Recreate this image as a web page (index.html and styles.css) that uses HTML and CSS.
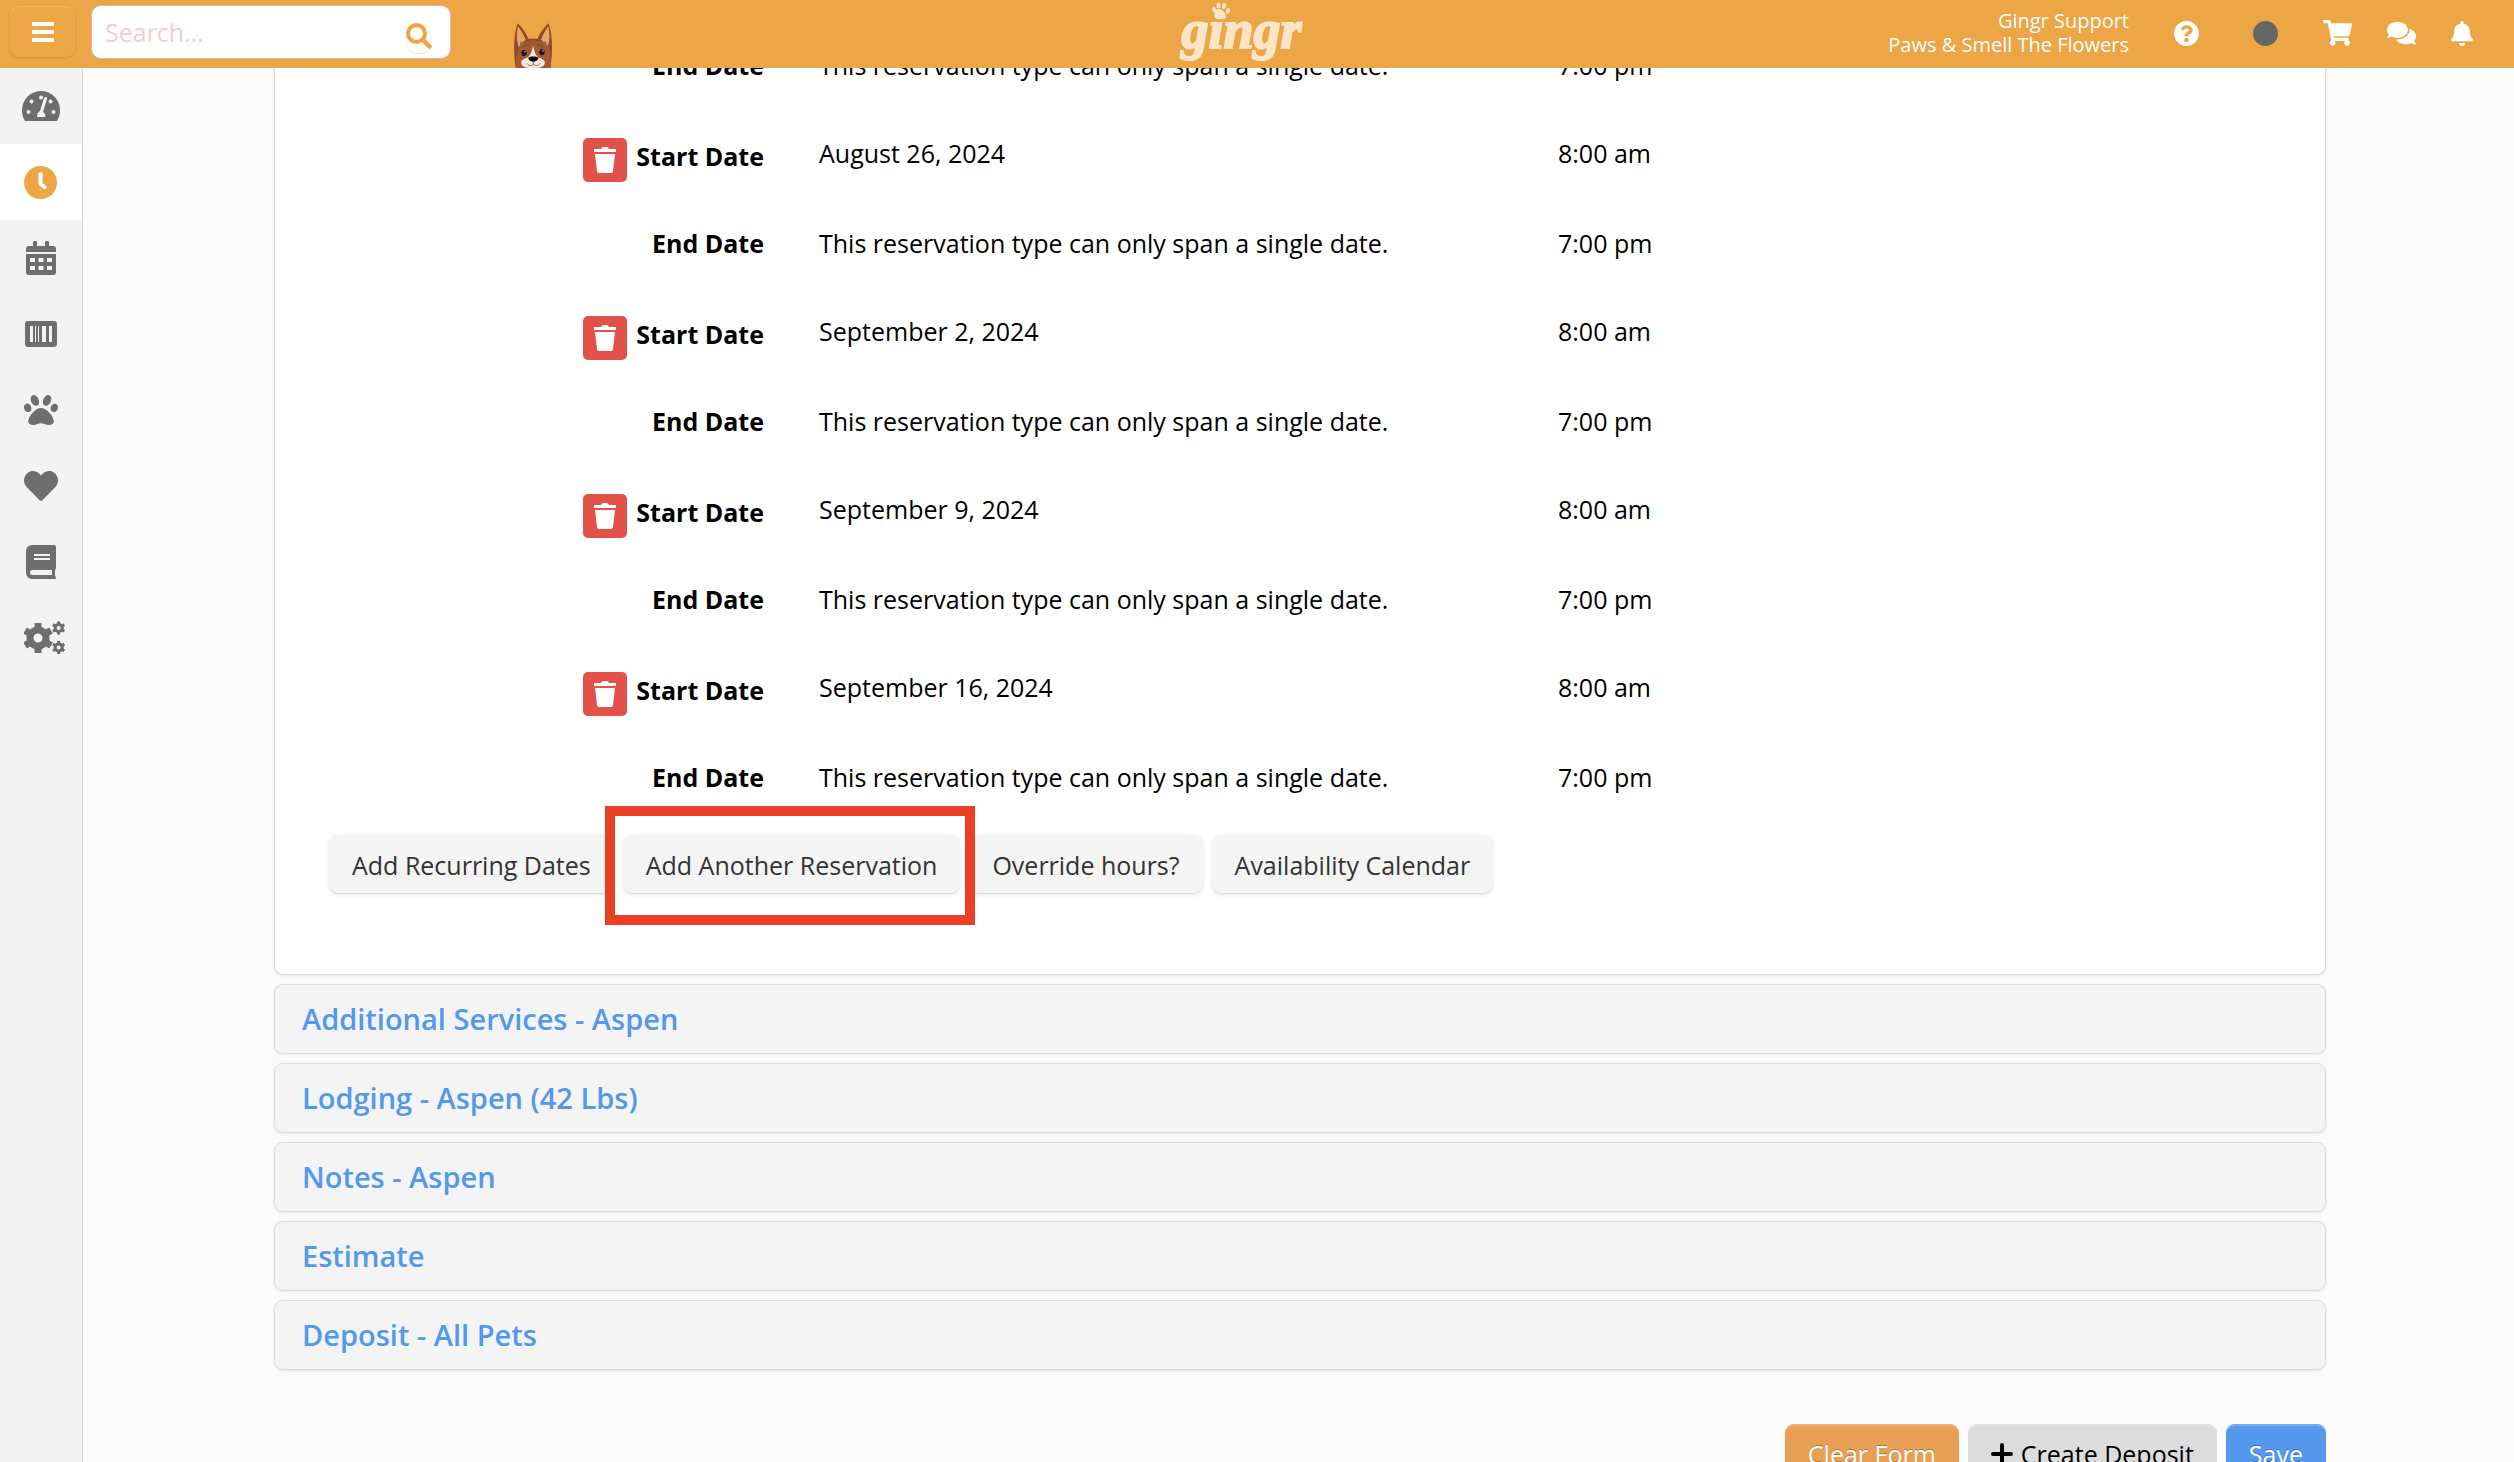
FILE: index.html
```
<!DOCTYPE html>
<html lang="en">
    <head>
        <meta charset="UTF-8">
        <meta name="viewport" content="width=device-width, initial-scale=1.0">
        <title>Gingr - New Reservation</title>
        <link rel="stylesheet" href="styles.css">
    </head>

    <body>

        <!-- Top bar -->
        <header class="topbar">
            <div class="topbar-left">
                <button type="button" class="menu-toggle" aria-label="Toggle menu">
                    <svg width="24" height="20" viewBox="0 0 24 20"><path fill="currentColor" d="M1 0h22v4H1zM1 8h22v4H1zM1 16h22v4H1z"/></svg>
                </button>
                <form class="search">
                    <input type="text" class="search-input" placeholder="Search..." aria-label="Search">
                    <button type="submit" class="search-button" aria-label="Search">
                        <svg width="26" height="26" viewBox="0 0 26 26" fill="none" stroke="currentColor"><circle cx="10.500" cy="10.500" r="8.500" stroke-width="4"/><path d="M17 17l6.500 6.500" stroke-width="4.500" stroke-linecap="round"/></svg>
                    </button>
                </form>
                <svg class="mascot" width="40" height="45" viewBox="43 21 118 135">
                    <path fill="#8f4a26" d="M50 156C44 115 42 60 56 22c10 8 24 28 32 46h28c8-18 22-38 33-46 13 38 12 92 5 134z"/>
                    <path fill="#e9a36c" d="M57 31c8 10 18 27 23 40-9 6-16 14-20 24C52 76 52 52 57 31zM148 31c-8 10-17 27-22 40 9 6 15 14 19 24 8-19 8-43 3-64z"/>
                    <path fill="#a5592f" d="M51 156c0-28 2-52 15-72 9-14 66-14 77 0 13 20 13 44 12 72z"/>
                    <path fill="#8f6a45" d="M64 78c8-2 13 2 10 8-5 6-9 8-13 8zM142 78c-8-2-13 2-10 8 5 6 9 8 12 8z"/>
                    <path fill="none" stroke="#85502f" stroke-width="4" stroke-linecap="round" d="M72 92q8-8 18-6M113 86q10-2 18 6"/>
                    <path fill="#f4e9df" d="M102 88c3 16 7 30 16 36 12 6 22 8 19 19-4 10-14 13-35 13s-32-3-35-13c-3-11 8-13 19-19 9-6 14-20 16-36z"/>
                    <ellipse cx="75" cy="111" rx="8" ry="9" fill="#15151a"/>
                    <ellipse cx="129" cy="109" rx="8" ry="9" fill="#15151a"/>
                    <circle cx="78" cy="107" r="2" fill="#fff"/>
                    <circle cx="132" cy="105" r="2" fill="#fff"/>
                    <path fill="#050505" d="M88 125c5-5 25-5 30 0 2 5-9 12-15 12s-17-7-15-12z"/>
                    <path fill="none" stroke="#4b3a32" stroke-width="2" d="M103 136v8M84 142c5 9 15 9 19 2 5 7 15 7 20-2"/>
                </svg>
            </div>

            <a href="#" class="logo">
                <svg class="logo-paw" width="18" height="18" viewBox="0 0 18 18" fill="currentColor"><ellipse cx="2.500" cy="8" rx="2" ry="3" transform="rotate(-25 2.500 8)"/><ellipse cx="6.500" cy="3.500" rx="2" ry="3"/><ellipse cx="12" cy="4" rx="2" ry="3" transform="rotate(15 12 4)"/><ellipse cx="16" cy="9" rx="2" ry="3" transform="rotate(30 16 9)"/><path d="M3 14c1-3 4-6 7-5s4 4 4 6c0 3-3 2-5 2-3 0-6 1-6-3z"/></svg>
                gingr
            </a>

            <div class="topbar-right">
                <div class="account">Gingr Support<br>Paws &amp; Smell The Flowers</div>
                <a href="#" class="top-link help" aria-label="Help">
                    <svg width="25" height="25" viewBox="8 8 496 496"><path fill="currentColor" d="M504 256c0 136.997-111.043 248-248 248S8 392.997 8 256C8 119.083 119.043 8 256 8s248 111.083 248 248zM262.655 90c-54.497 0-89.255 22.957-116.549 63.758-3.536 5.286-2.353 12.415 2.715 16.258l34.699 26.310c5.205 3.947 12.621 3.008 16.665-2.122 17.864-22.658 30.113-35.797 57.303-35.797 20.429 0 45.698 13.148 45.698 32.958 0 14.976-12.363 22.667-32.534 33.976C247.128 238.528 216 254.941 216 296v4c0 6.627 5.373 12 12 12h56c6.627 0 12-5.373 12-12v-1.333c0-28.462 83.186-29.647 83.186-106.667 0-58.002-60.165-102-116.531-102zM256 338c-25.365 0-46 20.635-46 46 0 25.364 20.635 46 46 46s46-20.636 46-46c0-25.365-20.635-46-46-46z"/></svg>
                </a>
                <span class="status"></span>
                <a href="#" class="top-link cart" aria-label="Cart">
                    <svg width="29" height="26" viewBox="0 0 576 512"><path fill="currentColor" d="M528.120 301.319l47.273-208C578.806 78.301 567.391 64 551.990 64H159.208l-9.166-44.810C147.758 8.021 137.930 0 126.529 0H24C10.745 0 0 10.745 0 24v16c0 13.255 10.745 24 24 24h69.883l70.248 343.435C147.325 417.100 136 435.222 136 456c0 30.928 25.072 56 56 56s56-25.072 56-56c0-15.674-6.447-29.835-16.824-40h209.647C430.447 426.165 424 440.326 424 456c0 30.928 25.072 56 56 56s56-25.072 56-56c0-22.172-12.888-41.332-31.579-50.405l5.517-24.276c3.413-15.018-8.002-29.319-23.403-29.319H218.117l-6.545-32h293.145c11.206 0 20.920-7.754 23.403-18.681z"/></svg>
                </a>
                <a href="#" class="top-link" aria-label="Messages">
                    <svg width="29" height="26" viewBox="0 0 576 512"><path fill="currentColor" d="M416 192c0-88.400-93.100-160-208-160S0 103.600 0 192c0 34.300 14.100 65.900 38 92-13.400 30.200-35.500 54.200-35.800 54.500-2.200 2.300-2.800 5.700-1.500 8.700S4.800 352 8 352c36.600 0 66.900-12.300 88.700-25 32.200 15.700 70.300 25 111.300 25 114.900 0 208-71.600 208-160zm122 220c23.900-26 38-57.700 38-92 0-66.900-53.500-124.200-129.300-148.100.9 6.600 1.300 13.300 1.300 20.100 0 105.900-107.700 192-240 192-10.800 0-21.300-.8-31.700-1.900C207.800 439.600 281.800 480 368 480c41 0 79.100-9.200 111.300-25 21.800 12.700 52.100 25 88.700 25 3.200 0 6.100-1.900 7.300-4.800 1.300-2.900.7-6.300-1.500-8.700-.3-.2-22.400-24.200-35.800-54.500z"/></svg>
                </a>
                <a href="#" class="top-link" aria-label="Notifications">
                    <svg width="22" height="25" viewBox="0 0 448 512"><path fill="currentColor" d="M224 512c35.320 0 63.970-28.650 63.970-64H160.030c0 35.350 28.650 64 63.970 64zm215.390-149.710c-19.320-20.760-55.470-51.990-55.470-154.290 0-77.700-54.480-139.900-127.940-155.160V32c0-17.670-14.320-32-31.980-32s-31.980 14.330-31.980 32v20.840C118.560 68.100 64.080 130.300 64.080 208c0 102.300-36.150 133.530-55.470 154.290-6 6.450-8.660 14.160-8.610 21.710.11 16.400 12.980 32 32.100 32h383.800c19.120 0 32-15.600 32.100-32 .05-7.550-2.610-15.270-8.610-21.710z"/></svg>
                </a>
            </div>
        </header>

        <div class="layout">

            <!-- Side menu -->
            <nav class="sidebar">
                <a href="#" class="side-link" aria-label="Dashboard">
                    <svg width="38" height="30" viewBox="0 0 38 30"><path fill="currentColor" d="M3 30C1 27 0 23 0 19a19 19 0 0 1 38 0c0 4-1 8-3 11z"/><g fill="#f3f3f3"><circle cx="19" cy="6.500" r="2"/><circle cx="9.500" cy="10.500" r="2"/><circle cx="28.500" cy="10.500" r="2"/><circle cx="6.500" cy="21" r="2"/><circle cx="31.500" cy="21" r="2"/><path d="M15 26c0-3 1-5 3-6l4-13c1-2 4-1 3 1l-4 13c2 1 3 3 2 5z"/></g></svg>
                </a>
                <a href="#" class="side-link active" aria-label="Reservations">
                    <svg width="33" height="33" viewBox="0 0 33 33"><circle cx="16.500" cy="16.500" r="16.500" fill="currentColor"/><path d="M16.500 8v10l4 3" fill="none" stroke="#fff" stroke-width="4" stroke-linecap="round" stroke-linejoin="round"/></svg>
                </a>
                <a href="#" class="side-link" aria-label="Calendar">
                    <svg width="30" height="34" viewBox="0 0 30 34"><path fill="currentColor" fill-rule="evenodd" d="M0 11V8a3 3 0 0 1 3-3h4V1q0-1 1-1h2q1 0 1 1v4h8V1q0-1 1-1h2q1 0 1 1v4h4a3 3 0 0 1 3 3v3zM0 13h30v18a3 3 0 0 1-3 3H3a3 3 0 0 1-3-3zM4 17v4h5v-4zm8.500 0v4h5v-4zm8.500 0v4h5v-4zM4 25v4h5v-4zm8.500 0v4h5v-4zm8.500 0v4h5v-4z"/></svg>
                </a>
                <a href="#" class="side-link" aria-label="Retail">
                    <svg width="32" height="26" viewBox="0 0 32 26"><rect width="32" height="26" rx="3" fill="currentColor"/><path fill="#f3f3f3" d="M5 5h3v16H5zM10 5h1v16h-1zM13 5h1v16h-1zM17 5h4v16h-4zM24 5h3v16h-3z"/></svg>
                </a>
                <a href="#" class="side-link" aria-label="Animals">
                    <svg width="34" height="34" viewBox="0 0 512 512"><path fill="currentColor" d="M256 224c-79.410 0-192 122.760-192 200.250 0 34.900 26.810 55.750 71.740 55.750 48.840 0 81.090-25.080 120.260-25.080 39.510 0 71.850 25.080 120.260 25.080 44.930 0 71.740-20.850 71.740-55.750C448 346.760 335.410 224 256 224zm-147.280-12.610c-10.400-34.650-42.440-57.090-71.560-50.130-29.120 6.960-44.290 40.690-33.890 75.340 10.400 34.650 42.440 57.090 71.560 50.130 29.120-6.960 44.290-40.690 33.890-75.340zm84.720-20.780c30.940-8.140 42.930-50.080 26.780-93.660-16.150-43.590-54.320-72.310-85.260-64.170-30.940 8.140-42.930 50.080-26.780 93.660 16.150 43.590 54.320 72.310 85.260 64.170zm281.390-29.340c-29.120-6.960-61.150 15.480-71.560 50.130-10.400 34.650 4.770 68.380 33.890 75.340 29.120 6.960 61.150-15.480 71.560-50.130 10.400-34.650-4.770-68.380-33.890-75.340zm-156.270 29.340c30.940 8.140 69.110-20.590 85.260-64.170 16.150-43.590 4.160-85.530-26.780-93.660-30.940-8.140-69.110 20.590-85.260 64.170-16.150 43.590-4.160 85.530 26.780 93.660z"/></svg>
                </a>
                <a href="#" class="side-link" aria-label="Favorites">
                    <svg width="34" height="34" viewBox="0 0 512 512"><path fill="currentColor" d="M462.300 62.600C407.500 15.900 326 24.300 275.700 76.200L256 96.500l-19.700-20.300C186.100 24.300 104.500 15.900 49.700 62.600c-62.800 53.600-66.100 149.800-9.900 207.900l193.500 199.800c12.500 12.900 32.800 12.900 45.300 0l193.500-199.800c56.300-58.100 53-154.300-9.800-207.900z"/></svg>
                </a>
                <a href="#" class="side-link" aria-label="Reports">
                    <svg width="30" height="34" viewBox="0 0 30 34"><path fill="currentColor" fill-rule="evenodd" d="M6 0h22q2 0 2 2v21q0 1-1 2v6q1 1 1 2t-1 1H6a6 6 0 0 1-6-6V6a6 6 0 0 1 6-6zM8 9v2h16V9zm0 4v2h16v-2zM6 25q-2 0-2 2.500T6 30h20v-5z"/></svg>
                </a>
                <a href="#" class="side-link settings" aria-label="Settings">
                    <svg width="42" height="34" viewBox="0 0 42 34">
                        <g id="gear" fill="none" stroke="currentColor">
                            <circle cx="14" cy="17" r="8" stroke-width="7"/>
                            <path stroke-width="7" stroke-linejoin="round" d="M14 2v6M14 26v6M1 9.500l5 3M22 21.500l5 3M1 24.500l5-3M22 12.500l5-3"/>
                        </g>
                        <use href="#gear" transform="translate(28.500 -0.500) scale(.44)"/>
                        <use href="#gear" transform="translate(28.500 19) scale(.44)"/>
                    </svg>
                </a>
            </nav>

            <main class="content">

                <!-- Reservation dates -->
                <section class="card">
                    <div class="date-row">
                        <div class="date-label">End Date</div>
                        <div>This reservation type can only span a single date.</div>
                        <div>7:00 pm</div>
                    </div>

                    <div class="date-row start">
                        <div class="date-label"><button type="button" class="remove" aria-label="Remove date"><svg width="24" height="26" viewBox="0 0 24 26"><path fill="currentColor" d="M1 2h7q1-2 2-2h4q1 0 2 2h7v3H1zM2 7h20l-2 17q0 2-2 2H6q-2 0-2-2z"/></svg></button>Start Date</div>
                        <div>August 26, 2024</div>
                        <div>8:00 am</div>
                    </div>
                    <div class="date-row end">
                        <div class="date-label">End Date</div>
                        <div>This reservation type can only span a single date.</div>
                        <div>7:00 pm</div>
                    </div>

                    <div class="date-row start">
                        <div class="date-label"><button type="button" class="remove" aria-label="Remove date"><svg width="24" height="26" viewBox="0 0 24 26"><path fill="currentColor" d="M1 2h7q1-2 2-2h4q1 0 2 2h7v3H1zM2 7h20l-2 17q0 2-2 2H6q-2 0-2-2z"/></svg></button>Start Date</div>
                        <div>September 2, 2024</div>
                        <div>8:00 am</div>
                    </div>
                    <div class="date-row end">
                        <div class="date-label">End Date</div>
                        <div>This reservation type can only span a single date.</div>
                        <div>7:00 pm</div>
                    </div>

                    <div class="date-row start">
                        <div class="date-label"><button type="button" class="remove" aria-label="Remove date"><svg width="24" height="26" viewBox="0 0 24 26"><path fill="currentColor" d="M1 2h7q1-2 2-2h4q1 0 2 2h7v3H1zM2 7h20l-2 17q0 2-2 2H6q-2 0-2-2z"/></svg></button>Start Date</div>
                        <div>September 9, 2024</div>
                        <div>8:00 am</div>
                    </div>
                    <div class="date-row end">
                        <div class="date-label">End Date</div>
                        <div>This reservation type can only span a single date.</div>
                        <div>7:00 pm</div>
                    </div>

                    <div class="date-row start">
                        <div class="date-label"><button type="button" class="remove" aria-label="Remove date"><svg width="24" height="26" viewBox="0 0 24 26"><path fill="currentColor" d="M1 2h7q1-2 2-2h4q1 0 2 2h7v3H1zM2 7h20l-2 17q0 2-2 2H6q-2 0-2-2z"/></svg></button>Start Date</div>
                        <div>September 16, 2024</div>
                        <div>8:00 am</div>
                    </div>
                    <div class="date-row end">
                        <div class="date-label">End Date</div>
                        <div>This reservation type can only span a single date.</div>
                        <div>7:00 pm</div>
                    </div>

                    <div class="date-actions">
                        <button type="button" class="btn">Add Recurring Dates</button>
                        <span class="highlight"><button type="button" class="btn">Add Another Reservation</button></span>
                        <button type="button" class="btn">Override hours?</button>
                        <button type="button" class="btn">Availability Calendar</button>
                    </div>
                </section>

                <!-- Collapsed sections -->
                <h4 class="panel"><a href="#">Additional Services - Aspen</a></h4>
                <h4 class="panel"><a href="#">Lodging - Aspen (42 Lbs)</a></h4>
                <h4 class="panel"><a href="#">Notes - Aspen</a></h4>
                <h4 class="panel"><a href="#">Estimate</a></h4>
                <h4 class="panel"><a href="#">Deposit - All Pets</a></h4>

                <!-- Form buttons -->
                <div class="form-actions">
                    <button type="reset" class="btn btn-warning">Clear Form</button>
                    <button type="button" class="btn btn-default"><svg width="22" height="22" viewBox="0 0 22 22"><path d="M11 2v18M2 11h18" stroke="currentColor" stroke-width="4" stroke-linecap="round"/></svg>Create Deposit</button>
                    <button type="submit" class="btn btn-primary">Save</button>
                </div>

            </main>
        </div>

    </body>
</html>
```
FILE: styles.css
```
* {
    box-sizing: border-box;
}
body {
    margin: 0;
    background-color: #fbfbfb;
    color: #000;
    font-family: "Open Sans", sans-serif;
    font-size: 25px;
    line-height: 36px;
}
a {
    text-decoration: none;
}
button, input {
    font-family: inherit;
    font-size: inherit;
    line-height: inherit;
}
svg {
    display: block;
    flex: none;
}

/* top bar */
.topbar {
    position: fixed;
    top: 0;
    left: 0;
    right: 0;
    z-index: 10;
    height: 68px;
    padding: 0 41px 0 10px;
    display: grid;
    grid-template-columns: 1fr auto 1fr;
    background-color: #eca646;
    color: white;
}
.topbar-left {
    display: flex;
    align-items: flex-start;
}
.menu-toggle {
    width: 65px;
    height: 51px;
    margin-top: 6px;
    padding: 0;
    display: flex;
    align-items: center;
    justify-content: center;
    background: none;
    color: white;
    border: none;
    border-radius: 9px;
    box-shadow: inset 0 1px 1px #f2b869, 0 1px 3px #cf9140;
}
.search {
    width: 360px;
    height: 54px;
    margin: 5px 0 0 16px;
    padding-right: 18px;
    display: flex;
    align-items: center;
    background-color: white;
    border: 1px solid #f6a9a9;
    border-radius: 10px;
}
.search-input {
    flex: 1;
    min-width: 0;
    padding: 0 0 0 13px;
    border: none;
    outline: none;
    background: none;
}
.search-input::placeholder {
    color: #f8cccc;
    opacity: 1;
}
.search-button {
    padding: 11px 0 4px;
    background: none;
    border: none;
    border-radius: 10px;
    color: #eca646;
    box-shadow: 0 1px 0 #e4e4e4;
}
.mascot {
    margin: 23px 0 0 62px;
}
.logo {
    position: relative;
    color: #fbe5c8;
    font-family: "Liberation Serif", serif;
    font-size: 54px;
    font-weight: bold;
    font-style: italic;
    line-height: 60px;
    -webkit-text-stroke: 2px #fbe5c8;
}
.logo-paw {
    position: absolute;
    top: 2px;
    left: 31px;
}
.topbar-right {
    display: flex;
    align-items: center;
    justify-content: flex-end;
    gap: 35px;
    padding-bottom: 2px;
}
.account {
    font-size: 20px;
    line-height: 24px;
    text-align: right;
}
.top-link {
    color: white;
}
.help, .cart {
    margin-left: 10px;
}
.status {
    width: 25px;
    height: 25px;
    margin-left: 19px;
    border-radius: 50%;
    background-color: #666;
}

/* side menu */
.layout {
    display: flex;
    height: 100vh;
    overflow: hidden;
}
.sidebar {
    flex: none;
    width: 83px;
    padding-top: 68px;
    background-color: #f3f3f3;
    border-right: 1px solid #d9d9d9;
}
.side-link {
    width: 81px;
    height: 76px;
    display: flex;
    align-items: center;
    justify-content: center;
    color: #6e6e6e;
}
.side-link.active {
    background-color: white;
    color: #eca646;
}
.settings {
    padding-left: 8px;
}

/* reservation form */
.content {
    flex: 1;
    padding: 0 188px 0 191px;
}
.card {
    padding: 47px 0 80px;
    background-color: white;
    border: 1px solid #dcdcdc;
    border-top: none;
    border-radius: 0 0 9px 9px;
    box-shadow: 0 1px 3px #e6e6e6;
}
.date-row {
    display: grid;
    grid-template-columns: 489fr 684fr 767fr;
    column-gap: 55px;
}
.date-row.start {
    margin-top: 52px;
}
.date-row.end {
    margin-top: 43px;
}
.date-label {
    display: flex;
    justify-content: flex-end;
    gap: 9px;
    font-weight: bold;
}
.start .date-label {
    padding-top: 3px;
}
.remove {
    width: 44px;
    height: 44px;
    padding: 0;
    display: flex;
    align-items: center;
    justify-content: center;
    background-color: #e2514a;
    color: white;
    border: none;
    border-radius: 5px;
}
.date-actions {
    display: flex;
    gap: 9px;
    padding: 40px 0 0 54px;
}
.btn {
    height: 59px;
    padding: 0 23px;
    display: flex;
    align-items: center;
    gap: 8px;
    background-color: #f4f4f4;
    color: #333;
    border: none;
    border-radius: 9px;
    box-shadow: inset 0 -1px 0 #dcdcdc, 0 1px 4px #e8e8e8;
}
.highlight {
    position: relative;
}
.highlight::after {
    content: "";
    position: absolute;
    inset: -29px -15px -31px -18px;
    border: 10px solid #eb3f25;
}
.panel {
    height: 70px;
    margin: 9px 0 0;
    padding: 0 27px;
    display: flex;
    align-items: center;
    background-color: #f4f4f4;
    border: 1px solid #dcdcdc;
    border-radius: 9px;
    box-shadow: 0 1px 3px #e6e6e6;
    font-size: 29px;
    font-weight: 600;
}
.panel a {
    color: #5298ec;
}
.form-actions {
    display: flex;
    justify-content: flex-end;
    gap: 9px;
    padding-top: 54px;
}
.btn-warning {
    background-color: #e8a055;
    color: white;
    text-shadow: 0 -1px 0 #a8743d;
    box-shadow: inset 0 2px 0 #edb177;
}
.btn-default {
    background-color: #dcdcdc;
    color: black;
    box-shadow: inset 0 2px 0 #e2e2e2;
}
.btn-primary {
    background-color: #5598ed;
    color: white;
    text-shadow: 0 -1px 0 #3d6eac;
    box-shadow: inset 0 2px 0 #77adf1;
}
```
